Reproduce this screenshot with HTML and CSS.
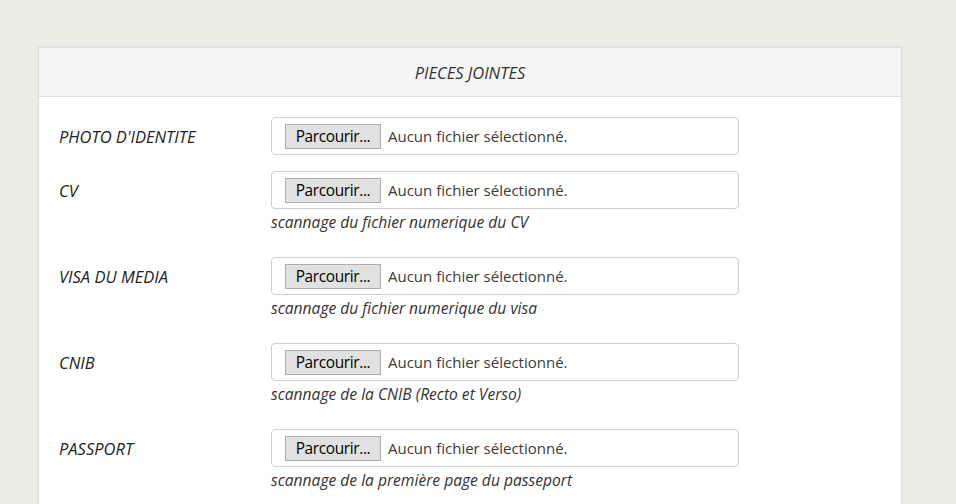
FILE: index.html
```html
<!DOCTYPE html>
<html lang="fr">
<head>
<meta charset="utf-8">
<title>Pièces jointes</title>
<link rel="stylesheet" href="styles.css">
</head>
<body>
<div class="panel">
  <div class="panel-head">PIECES JOINTES</div>
  <div class="panel-body">
    <div class="row">
      <div class="label">PHOTO D'IDENTITE</div>
      <div class="field">
        <div class="file"><span class="btn">Parcourir...</span><span class="none">Aucun fichier sélectionné.</span></div>
      </div>
    </div>
    <div class="row">
      <div class="label">CV</div>
      <div class="field">
        <div class="file"><span class="btn">Parcourir...</span><span class="none">Aucun fichier sélectionné.</span></div>
        <div class="help">scannage du fichier numerique du CV</div>
      </div>
    </div>
    <div class="row">
      <div class="label">VISA DU MEDIA</div>
      <div class="field">
        <div class="file"><span class="btn">Parcourir...</span><span class="none">Aucun fichier sélectionné.</span></div>
        <div class="help">scannage du fichier numerique du visa</div>
      </div>
    </div>
    <div class="row">
      <div class="label">CNIB</div>
      <div class="field">
        <div class="file"><span class="btn">Parcourir...</span><span class="none">Aucun fichier sélectionné.</span></div>
        <div class="help">scannage de la CNIB (Recto et Verso)</div>
      </div>
    </div>
    <div class="row">
      <div class="label">PASSPORT</div>
      <div class="field">
        <div class="file"><span class="btn">Parcourir...</span><span class="none">Aucun fichier sélectionné.</span></div>
        <div class="help">scannage de la première page du passeport</div>
      </div>
    </div>
  </div>
</div>
</body>
</html>
```
FILE: styles.css
```css
html, body {
  margin: 0;
  padding: 0;
}
body {
  background: #ededE5;
  font-family: "Open Sans", "Noto Sans", sans-serif;
  font-size: 14px;
  color: #333;
  padding: 47px 0 0 38px;
}
.panel {
  width: 862px;
  background: #fff;
  border: 1px solid #dcdcdc;
  box-shadow: 0 0 2px rgba(0,0,0,0.08);
}
.panel-head {
  height: 48px;
  background: #f5f5f5;
  border-bottom: 1px solid #dcdcdc;
  display: flex;
  align-items: center;
  justify-content: center;
  font-style: italic;
  font-size: 16.5px;
  color: #333;
}
.panel-body {
  padding: 20px 20px 0 20px;
}
.row {
  display: grid;
  grid-template-columns: 212px 468px;
  margin-bottom: 16px;
}
.label {
  height: 38px;
  display: flex;
  align-items: center;
  font-style: italic;
  font-size: 16.5px;
  color: #222;
}
.file {
  height: 38px;
  box-sizing: border-box;
  border: 1px solid #cfcfcf;
  border-radius: 4px;
  display: flex;
  align-items: center;
  padding-left: 13px;
  font-size: 15px;
}
.btn {
  height: 25px;
  box-sizing: border-box;
  width: 96px;
  background: #e1e1e1;
  border: 1px solid #adadad;
  color: #000;
  display: flex;
  align-items: center;
  justify-content: center;
  margin-right: 7px;
  font-size: 15.4px;
  letter-spacing: -0.35px;
}
.none {
  color: #3a3a3a;
}
.help {
  font-style: italic;
  font-size: 15.6px;
  color: #333;
  line-height: 20px;
  margin-top: 3px;
  margin-bottom: 9px;
}
```
